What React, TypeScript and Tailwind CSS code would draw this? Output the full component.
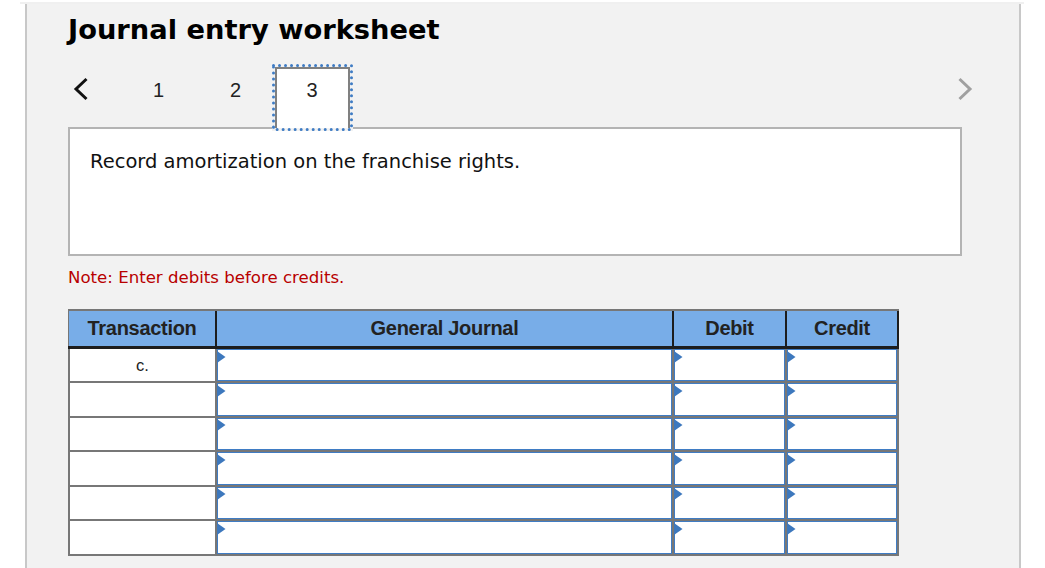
import React from 'react';

const verdana = '[font-family:"DejaVu_Sans",Verdana,sans-serif]';
const arial = '[font-family:"Liberation_Sans",Arial,sans-serif]';

function Arrow() {
  return (
    <svg className="absolute left-[-0.5px] top-[1.5px]" width="9" height="12" viewBox="0 0 9 12">
      <polygon points="0,0 8.5,6 0,12" fill="#3d78bd" />
    </svg>
  );
}

function InputCell({ className }: { className: string }) {
  return (
    <div className={`relative h-full border-r-[2px] border-b-[2px] border-[#777] ${className}`}>
      <div className="h-full border border-[#3f7cc4] bg-white" />
      <Arrow />
    </div>
  );
}

function Row({ label, first }: { label?: string; first?: boolean }) {
  return (
    <div className={`flex ${first ? 'h-[34px]' : 'h-[34.5px]'}`}>
      <div className="flex w-[147px] items-center justify-center border-r-[2px] border-b-[2px] border-[#777] bg-white text-[16.5px] text-[#222]">
        {label}
      </div>
      <InputCell className="w-[457px]" />
      <InputCell className="w-[113px]" />
      <InputCell className="w-[112px]" />
    </div>
  );
}

function HeadCell({ className, children }: { className: string; children: React.ReactNode }) {
  return (
    <div className={`flex items-center justify-center border-r-[2px] border-[#1d1d1d] pb-[1px] text-[20px] font-bold tracking-[-0.3px] text-[#222] ${className}`}>
      {children}
    </div>
  );
}

export default function App() {
  return (
    <div className={`h-[568px] w-[1045px] overflow-hidden bg-white ${verdana}`}>
      <div className="ml-[20px] mt-[2px] h-[2px] w-[1004px] bg-[#f0f0f0]" />
      <div className="ml-[25px] h-[564px] w-[996px] border-x-[2px] border-[#c8c8c8] bg-[#f2f2f2] pl-[41px]">
        <h1 className="pt-[7px] text-[27.3px] font-bold leading-[38px] text-black">Journal entry worksheet</h1>

        <div className="relative mt-[15px] flex h-[63px] items-center">
          <svg className="ml-[5px] mb-[13px]" width="16" height="24" viewBox="0 0 16 24">
            <path d="M13.5 2 L3 12 L13.5 22" fill="none" stroke="#111" strokeWidth="3" />
          </svg>
          <div className={`flex ${arial} text-[20px] text-[#222]`}>
            <div className="ml-[31px] w-[77px] pb-[12px] text-center">1</div>
            <div className="w-[77px] pb-[12px] text-center">2</div>
          </div>
          <div className={`absolute left-[204px] top-0 z-10 flex h-[67px] w-[81px] bg-[#f2f2f2] p-[3px] ${arial}`}>
            <div className="flex h-full w-full items-center justify-center border-x-[2px] border-t-[2px] border-[#808080] bg-white pb-[17px] pr-[1px] text-[20px] text-[#222]">
              3
            </div>
            <svg className="absolute left-0 top-0" width="81" height="67" viewBox="0 0 81 67">
              <rect x="1.5" y="1.5" width="78" height="64" fill="none" stroke="#3f7cc4" strokeWidth="3" strokeLinecap="round" strokeDasharray="0.01 6" />
            </svg>
          </div>
          <svg className="absolute left-[889px] top-[13px]" width="16" height="24" viewBox="0 0 16 24">
            <path d="M2.5 2 L13 12 L2.5 22" fill="none" stroke="#a0a0a0" strokeWidth="3" />
          </svg>
        </div>

        <div className="h-[129px] w-[894px] border-[2px] border-[#b4b4b4] bg-white pl-[20px] pt-[19px] text-[19.5px] leading-[28px] text-[#111]">
          Record amortization on the franchise rights.
        </div>

        <p className="mt-[10px] text-[16.6px] leading-[24px] text-[#b80000]">Note: Enter debits before credits.</p>

        <div className={`mt-[19px] w-[831px] border-t-[2px] border-[#777] ${arial}`}>
          <div className="flex h-[38px] border-b-[3px] border-[#1d1d1d] bg-[#78ade8]">
            <div className="w-px bg-[#777]" />
            <HeadCell className="w-[148px]">Transaction</HeadCell>
            <HeadCell className="w-[457px]">General Journal</HeadCell>
            <HeadCell className="w-[113px]">Debit</HeadCell>
            <HeadCell className="w-[112px]">Credit</HeadCell>
          </div>
          <div className="border-l-[2px] border-[#777]">
            <Row label="c." first />
            <Row />
            <Row />
            <Row />
            <Row />
            <Row />
          </div>
        </div>
      </div>
    </div>
  );
}
